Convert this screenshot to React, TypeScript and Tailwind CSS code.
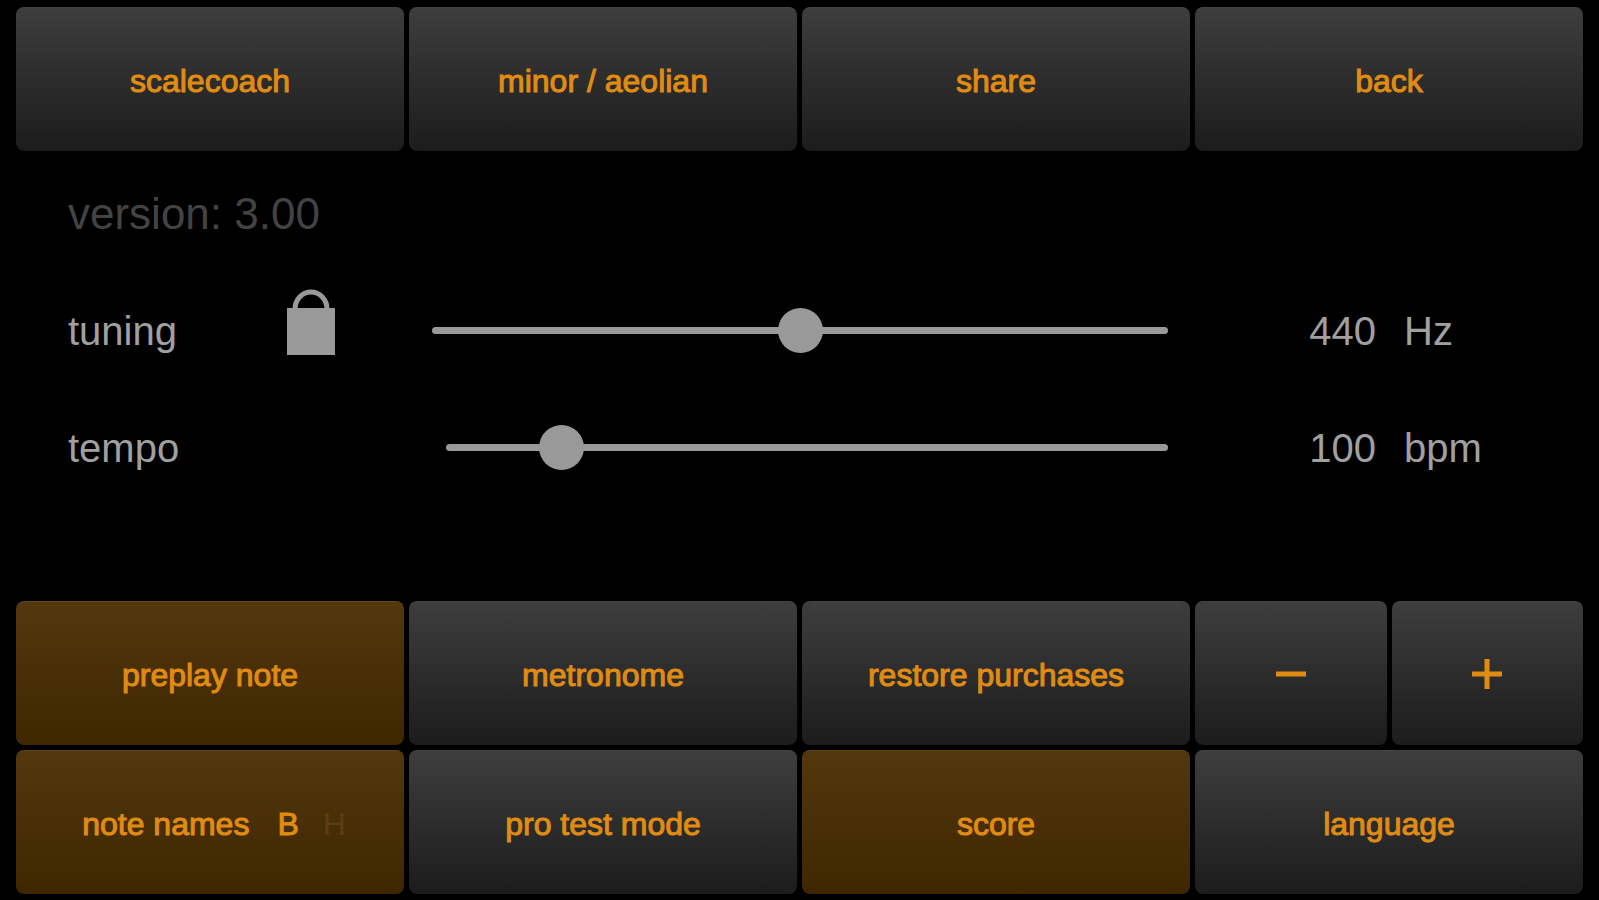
import { useState } from "react";
import clsx from "clsx";

interface PadProps {
  children: React.ReactNode;
  active?: boolean;
  label?: string;
  className?: string;
  onClick?: () => void;
}

function Pad({ children, active, label, className, onClick }: PadProps) {
  return (
    <button
      type="button"
      aria-label={label}
      aria-pressed={active}
      onClick={onClick}
      className={clsx(
        "flex h-36 w-full items-center justify-center rounded-lg border-t bg-linear-to-b text-[32px] leading-10 text-[#e08c13]",
        active
          ? "border-[#60441a] from-[#53370f] to-[#3e2700]"
          : "border-[#444444] from-[#3e3e3e] to-[#1c1c1c]",
        className
      )}
    >
      {children}
    </button>
  );
}

function Label({ children }: { children: React.ReactNode }) {
  return <span className="pt-0.5 [-webkit-text-stroke:1px_#e08c13]">{children}</span>;
}

function LockIcon() {
  return (
    <svg viewBox="0 0 50 68" className="h-[68px] w-[50px]" aria-hidden="true">
      <path
        d="M9 21 A16 17 0 0 1 41 21"
        fill="none"
        stroke="#999999"
        strokeWidth="5"
      />
      <rect x="1" y="20" width="48" height="47" fill="#999999" />
    </svg>
  );
}

interface SliderRowProps {
  id: string;
  label: string;
  unit: string;
  value: number;
  min: number;
  max: number;
  lock?: boolean;
  onChange: (value: number) => void;
}

function SliderRow({ id, label, unit, value, min, max, lock, onChange }: SliderRowProps) {
  return (
    <div className="flex h-[117px] items-center text-[40px] leading-[48px] text-[#a0a0a0]">
      <label htmlFor={id} className="w-[218px]">
        {label}
      </label>
      {lock ? (
        <button type="button" aria-label="lock tuning" className="mr-24 -mt-[18px]">
          <LockIcon />
        </button>
      ) : (
        <div className="w-40" />
      )}
      <input
        id={id}
        type="range"
        min={min}
        max={max}
        value={value}
        onChange={(e) => onChange(Number(e.target.value))}
        className="h-11 min-w-0 flex-1 cursor-pointer appearance-none bg-transparent [&::-webkit-slider-runnable-track]:h-[7px] [&::-webkit-slider-runnable-track]:rounded-full [&::-webkit-slider-runnable-track]:bg-[#999999] [&::-webkit-slider-thumb]:-mt-[19px] [&::-webkit-slider-thumb]:size-[45px] [&::-webkit-slider-thumb]:appearance-none [&::-webkit-slider-thumb]:rounded-full [&::-webkit-slider-thumb]:bg-[#999999]"
      />
      <output htmlFor={id} className="w-52 text-right">
        {value}
      </output>
      <span className="w-[207px] pl-7">{unit}</span>
    </div>
  );
}

export default function App() {
  const [tuning, setTuning] = useState(440);
  const [tempo, setTempo] = useState(100);
  const [preplay, setPreplay] = useState(true);
  const [metronome, setMetronome] = useState(false);
  const [noteNames, setNoteNames] = useState(true);
  const [proTest, setProTest] = useState(false);
  const [score, setScore] = useState(true);

  return (
    <div className="flex min-h-screen flex-col bg-black px-4 pt-[7px] pb-[6px] font-['Liberation_Sans',Arial,sans-serif]">
      <nav className="grid grid-cols-4 gap-[5px]">
        <Pad><Label>scalecoach</Label></Pad>
        <Pad><Label>minor / aeolian</Label></Pad>
        <Pad><Label>share</Label></Pad>
        <Pad><Label>back</Label></Pad>
      </nav>

      <main className="pt-[33px] pl-[52px]">
        <p className="mb-7 text-[44px] leading-[60px] text-[#434343]">version: 3.00</p>
        <SliderRow
          id="tuning"
          label="tuning"
          unit="Hz"
          value={tuning}
          min={430}
          max={450}
          lock
          onChange={setTuning}
        />
        <SliderRow
          id="tempo"
          label="tempo"
          unit="bpm"
          value={tempo}
          min={60}
          max={350}
          onChange={setTempo}
        />
      </main>

      <div className="mt-auto grid grid-cols-4 gap-[5px]">
        <Pad active={preplay} onClick={() => setPreplay(!preplay)}>
          <Label>preplay note</Label>
        </Pad>
        <Pad active={metronome} onClick={() => setMetronome(!metronome)}>
          <Label>metronome</Label>
        </Pad>
        <Pad><Label>restore purchases</Label></Pad>
        <div className="grid grid-cols-2 gap-[5px]">
          <Pad label="decrease">
            <svg viewBox="0 0 32 32" className="size-8" aria-hidden="true">
              <path d="M1 16H31" stroke="currentColor" strokeWidth="5" />
            </svg>
          </Pad>
          <Pad label="increase">
            <svg viewBox="0 0 32 32" className="size-8" aria-hidden="true">
              <path d="M1 16H31M16 1V31" stroke="currentColor" strokeWidth="5" />
            </svg>
          </Pad>
        </div>
        <Pad active={noteNames} className="pl-2" onClick={() => setNoteNames(!noteNames)}>
          <Label>note names</Label>
          <span className="ml-7 pt-0.5 [-webkit-text-stroke:1px_#e08c13]">B</span>
          <span className="ml-6 pt-0.5 text-[#5c3e12]">H</span>
        </Pad>
        <Pad active={proTest} onClick={() => setProTest(!proTest)}>
          <Label>pro test mode</Label>
        </Pad>
        <Pad active={score} onClick={() => setScore(!score)}>
          <Label>score</Label>
        </Pad>
        <Pad><Label>language</Label></Pad>
      </div>
    </div>
  );
}
